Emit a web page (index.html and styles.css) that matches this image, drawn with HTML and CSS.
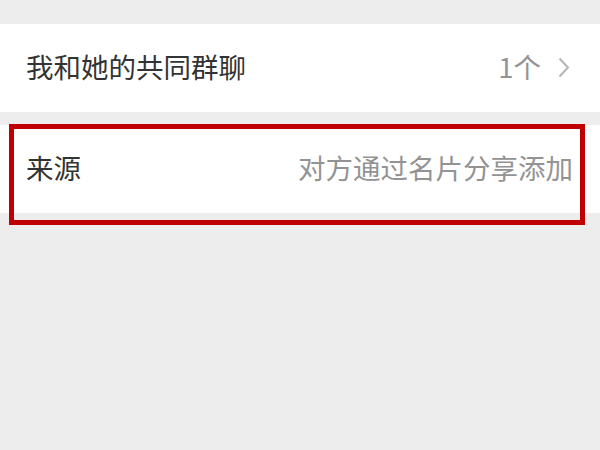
FILE: index.html
```html
<!DOCTYPE html>
<html lang="zh">
<head>
<meta charset="utf-8">
<link rel="stylesheet" href="styles.css">
</head>
<body>
<div class="page">
  <div class="cell">
    <span class="label">我和她的共同群聊</span>
    <span class="value">
      <span>1个</span>
      <svg class="chev" width="12" height="21" viewBox="0 0 12 21"><path d="M1.5 1.5 L10 10.5 L1.5 19.5" fill="none" stroke="#b5b5b5" stroke-width="2"/></svg>
    </span>
  </div>
  <div class="cell cell-source">
    <span class="label">来源</span>
    <span class="value">对方通过名片分享添加</span>
    <div class="highlight"></div>
  </div>
</div>
</body>
</html>
```

FILE: styles.css
```css
html, body {
  margin: 0;
  padding: 0;
  background: #ededed;
}
.page {
  width: 600px;
  height: 450px;
  padding-top: 24px;
  box-sizing: border-box;
  display: flex;
  flex-direction: column;
  gap: 13px;
  font-family: "Noto Sans CJK SC", "Noto Sans", sans-serif;
}
.cell {
  position: relative;
  height: 88px;
  background: #fff;
  display: flex;
  align-items: center;
  justify-content: space-between;
  padding: 0 30px 0 26px;
  box-sizing: border-box;
}
.cell-source {
  padding-right: 27px;
}
.label {
  font-size: 27.5px;
  font-weight: 400;
  color: #333;
  line-height: 1;
  margin-top: -2px;
}
.value {
  font-size: 27.5px;
  font-weight: 400;
  color: #939393;
  line-height: 1;
  display: flex;
  align-items: center;
  gap: 17px;
  margin-top: -2px;
}
.chev {
  display: block;
}
.highlight {
  position: absolute;
  left: 9px;
  top: -1px;
  width: 576px;
  height: 101px;
  border: 5px solid #c00000;
  box-sizing: border-box;
}
```
